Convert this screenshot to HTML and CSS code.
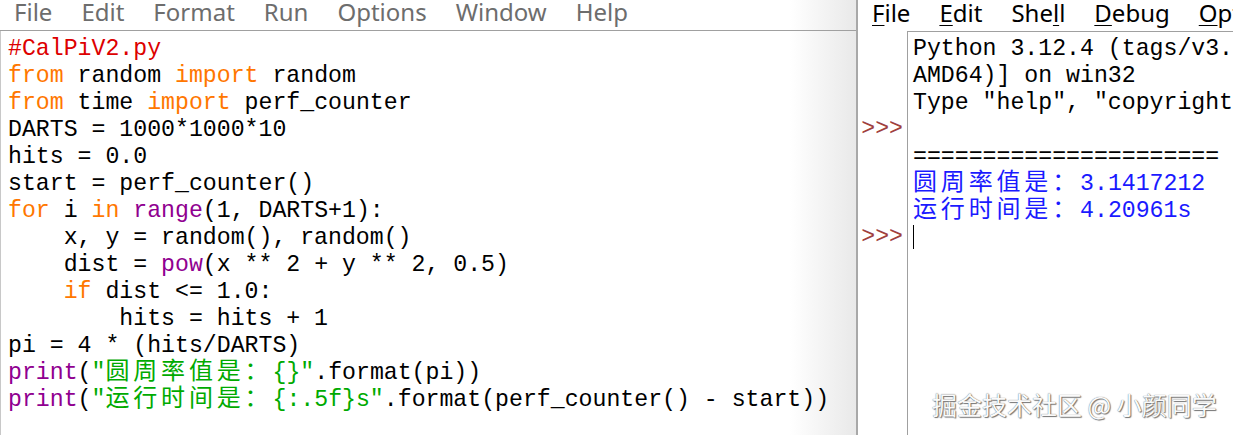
FILE: index.html
```
<!DOCTYPE html>
<html lang="zh-CN">
<head>
    <meta charset="UTF-8">
    <title>CalPiV2.py - IDLE</title>
    <link rel="stylesheet" href="styles.css">
</head>
<body>
    <div class="desktop">
        <!-- Editor window -->
        <section class="editor">
            <nav class="menubar menubar-inactive">
                <span>File</span>
                <span>Edit</span>
                <span>Format</span>
                <span>Run</span>
                <span>Options</span>
                <span>Window</span>
                <span>Help</span>
            </nav>
            <pre class="code"><span class="cm">#CalPiV2.py</span>
<span class="kw">from</span> random <span class="kw">import</span> random
<span class="kw">from</span> time <span class="kw">import</span> perf_counter
DARTS = 1000*1000*10
hits = 0.0
start = perf_counter()
<span class="kw">for</span> i <span class="kw">in</span> <span class="bi">range</span>(1, DARTS+1):
    x, y = random(), random()
    dist = <span class="bi">pow</span>(x ** 2 + y ** 2, 0.5)
    <span class="kw">if</span> dist &lt;= 1.0:
        hits = hits + 1
pi = 4 * (hits/DARTS)
<span class="bi">print</span>(<span class="st">"<span class="cjk">圆周率值是：</span>{}"</span>.format(pi))
<span class="bi">print</span>(<span class="st">"<span class="cjk">运行时间是：</span>{:.5f}s"</span>.format(perf_counter() - start))</pre>
        </section>

        <!-- Shell window -->
        <section class="shell">
            <nav class="menubar">
                <span><u>F</u>ile</span>
                <span><u>E</u>dit</span>
                <span>She<u>l</u>l</span>
                <span><u>D</u>ebug</span>
                <span><u>O</u>ptions</span>
                <span><u>W</u>indow</span>
            </nav>
            <div class="shell-body">
                <pre class="sidebar">
 
 
 
<span class="prompt">&gt;&gt;&gt;</span>
 
 
 
<span class="prompt">&gt;&gt;&gt;</span></pre>
                <pre class="console">Python 3.12.4 (tags/v3.12.4:8e8a4ba, Jun  6 2024, 19:30:16) [MSC v.1940 64 bit (
AMD64)] on win32
Type "help", "copyright", "credits" or "license()" for more information.

====================== RESTART: C:/Users/CalPiV2.py ======================
<span class="out"><span class="cjk">圆周率值是：</span>3.1417212</span>
<span class="out"><span class="cjk">运行时间是：</span>4.20961s</span>
<span class="caret"></span></pre>
            </div>
            <div class="watermark">掘金技术社区 @ 小颜同学</div>
        </section>
    </div>
</body>
</html>
```
FILE: styles.css
```
html, body {
    margin: 0;
    padding: 0;
    background: #fff;
    overflow: hidden;
}
.desktop {
    display: flex;
    width: 1233px;
    height: 435px;
}
.menubar {
    display: flex;
    gap: 29px;
    height: 30px;
    padding-left: 15px;
    font-family: "Noto Sans", sans-serif;
    font-size: 24px;
    line-height: 24px;
    color: #000;
    white-space: nowrap;
    box-sizing: border-box;
}
.menubar u {
    text-decoration-thickness: 1px;
    text-underline-offset: 3px;
}
.menubar-inactive {
    color: #6d6d6d;
    border-bottom: 1px solid #a0a0a0;
    height: 31px;
    padding-left: 14px;
}

/* editor window */
.editor {
    width: 858px;
    flex: none;
    display: flex;
    flex-direction: column;
    background: linear-gradient(to right, #fff 790px, #e9e9e9 855px);
    border-right: 2px solid #a8a8a8;
    box-sizing: border-box;
}
pre {
    margin: 0;
    font-family: "Liberation Mono", monospace;
    font-size: 23.2px;
    line-height: 27px;
    white-space: pre;
}
.code {
    flex: 1;
    padding: 5px 0 0 7px;
    border-left: 1px solid #c8c8c8;
    color: #000;
}
.cm { color: #dd0000; }
.kw { color: #ff7700; }
.bi { color: #900090; }
.st { color: #00aa00; }
.cjk {
    font-family: "Noto Sans CJK SC", sans-serif;
    font-size: 24px;
    line-height: 0;
    letter-spacing: 3.84px;
}

/* shell window */
.shell {
    flex: 1;
    position: relative;
    display: flex;
    flex-direction: column;
    min-width: 0;
    overflow: hidden;
}
.shell .menubar {
    padding-left: 14px;
    height: 31px;
    padding-top: 1px;
}
.shell-body {
    flex: 1;
    display: flex;
    min-height: 0;
}
.sidebar {
    width: 49px;
    flex: none;
    padding-top: 4px;
    text-align: right;
    padding-right: 4px;
    box-sizing: border-box;
}
.prompt {
    color: #a0403c;
}
.console {
    flex: 1;
    min-width: 0;
    overflow: hidden;
    padding: 4px 0 0 5px;
    border-left: 1px solid #a0a0a0;
    border-top: 1px solid #a0a0a0;
    color: #000;
}
.out { color: #1a1aff; }
.caret {
    display: inline-block;
    width: 1px;
    height: 24px;
    background: #000;
    vertical-align: -5px;
}
.watermark {
    position: absolute;
    left: 74px;
    top: 388px;
    font-family: "Noto Sans CJK SC", sans-serif;
    font-size: 25px;
    line-height: 32px;
    color: #fafafa;
    text-shadow: 0 0 1px #555, 1px 1px 1px #777;
    white-space: nowrap;
}
```
